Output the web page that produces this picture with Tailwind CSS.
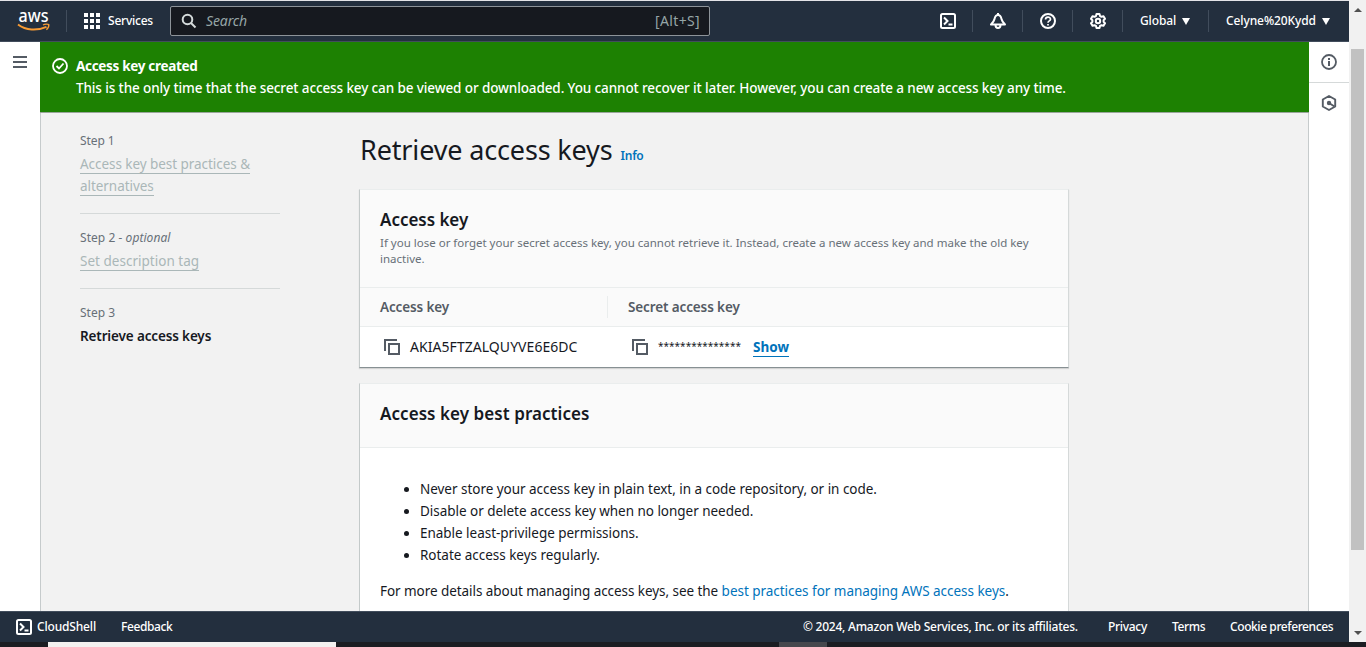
<!DOCTYPE html>
<html lang="en">
<head>
<meta charset="utf-8">
<title>Retrieve access keys</title>
<script src="https://cdn.jsdelivr.net/npm/@tailwindcss/browser@4"></script>
</head>
<body class="h-[647px] w-[1366px] overflow-hidden bg-white font-['Noto_Sans','Open_Sans',sans-serif] text-sm text-[#16191f]">
<div class="flex h-[642px]">
  <div class="flex w-[1349px] flex-col whitespace-nowrap">
    <header class="flex h-[42px] shrink-0 items-center border-t border-b border-t-[#e4e4e8] border-b-[#414d5c] bg-[#232f3e] text-xs font-medium text-white">
      <svg class="ml-4 h-6 w-[34px] overflow-visible" viewBox="0 0 34 24">
        <text x="2.500" y="13" font-family="Noto Sans" font-size="17.500" font-weight="500" textLength="30" lengthAdjust="spacingAndGlyphs" fill="#fff">aws</text>
        <path d="M2 15.500C10 21.600 21 22 30.500 17.800" fill="none" stroke="#f79b34" stroke-width="2"/>
        <path d="M27 16C29 14.800 32 15 32.700 15.500C33 16.600 32 19.300 30.400 20.800" fill="none" stroke="#f79b34" stroke-width="1.400"/>
      </svg>
      <div class="ml-4 h-[22px] w-px bg-[#414d5c]"></div>
      <svg class="ml-[17px] size-4" viewBox="0 0 16 16" fill="#fff"><path d="M0 0h4v4H0zM6 0h4v4H6zM12 0h4v4h-4zM0 6h4v4H0zM6 6h4v4H6zM12 6h4v4h-4zM0 12h4v4H0zM6 12h4v4H6zM12 12h4v4h-4z"/></svg>
      <div class="ml-2 w-[62px] tracking-[-0.22px]">Services</div>
      <div class="flex h-[30px] w-[540px] items-center rounded-xs border border-[#8d9399] bg-[#16191f] text-sm font-normal text-[#95a5a6]">
        <svg class="ml-2.5 size-4" viewBox="0 0 16 16" fill="none" stroke="#d5dbdb" stroke-width="2"><circle cx="6.500" cy="6.500" r="4.800"/><path d="M10 10l4.500 4.500"/></svg>
        <span class="ml-[9px] tracking-[-0.12px] italic">Search</span>
        <span class="mr-[9px] ml-auto tracking-[0.35px]">[Alt+S]</span>
      </div>
      <div class="ml-[230px] flex items-center">
        <svg class="size-4" viewBox="0 0 16 16" fill="none" stroke="#fff" stroke-width="2"><rect x="1" y="1" width="14" height="14" rx="1.500"/><path d="M4 4.500l3.500 3.500L4 11.500M8.500 11.500h4"/></svg>
        <div class="ml-4 h-[22px] w-px bg-[#414d5c]"></div>
        <svg class="ml-[17px] size-4" viewBox="0 0 16 16" fill="none" stroke="#fff" stroke-width="2" stroke-linejoin="round"><path d="M8 0v2M8 2C6 2 5 3.500 4.500 6C4.100 8 3 9.500 1 11.500h14C13 9.500 11.900 8 11.500 6C11 3.500 10 2 8 2zM5.500 12c0 4 5 4 5 0"/></svg>
        <div class="ml-4 h-[22px] w-px bg-[#414d5c]"></div>
        <svg class="ml-[17px] size-4" viewBox="0 0 16 16" fill="none" stroke="#fff" stroke-width="2"><circle cx="8" cy="8" r="7"/><path d="M5.500 6.500C5.500 3.300 10.500 3.300 10.500 6.200C10.500 8 8 7.800 8 9.800M8 11v1.600" stroke-width="1.700"/></svg>
        <div class="ml-4 h-[22px] w-px bg-[#414d5c]"></div>
        <svg class="ml-[17px] size-4" viewBox="0 0 16 16" fill="none" stroke="#fff" stroke-width="2" stroke-linejoin="round"><path d="M6.500 1h3l.5 2 1.500.8 2-.6 1.500 2.600L13.600 7.200v1.600L15 10.200l-1.500 2.600-2-.6L10 13l-.5 2h-3L6 13l-1.500-.8-2 .6L1 10.200 2.400 8.800V7.200L1 5.800l1.500-2.600 2 .6L6 3z"/><circle cx="8" cy="8" r="2.200"/></svg>
        <div class="ml-4 h-[22px] w-px bg-[#414d5c]"></div>
        <div class="ml-[17px] w-[42px] tracking-[-0.14px]">Global</div>
        <svg class="h-[7px] w-2" viewBox="0 0 8 7" fill="#fff"><path d="M0 0h8L4 7z"/></svg>
        <div class="ml-[18px] h-[22px] w-px bg-[#414d5c]"></div>
        <div class="ml-[17px] w-24 tracking-[-0.1px]">Celyne%20Kydd</div>
        <svg class="h-[7px] w-2" viewBox="0 0 8 7" fill="#fff"><path d="M0 0h8L4 7z"/></svg>
      </div>
    </header>

    <div class="flex min-h-0 flex-1">
      <aside class="w-10 shrink-0">
        <svg class="mt-3.5 ml-[13px] h-3 w-3.5" viewBox="0 0 14 12" fill="#545b64"><path d="M0 0h14v2H0zM0 5h14v2H0zM0 10h14v2H0z"/></svg>
      </aside>
      <div class="flex w-[1269px] flex-col">
        <div class="flex h-[71px] shrink-0 border-b border-[#9aa59b] bg-[#1d8102] text-white">
          <svg class="mt-4 ml-3 size-4" viewBox="0 0 16 16" fill="none" stroke="#fff" stroke-width="1.800"><circle cx="8" cy="8" r="7"/><path d="M4.500 8l2.500 2.500L11.500 5.500"/></svg>
          <div class="mt-[13px] ml-2 leading-[22px]">
            <div class="text-[13.5px] font-bold tracking-[-0.31px]">Access key created</div>
            <div class="text-[13.5px] font-medium tracking-[-0.11px]">This is the only time that the secret access key can be viewed or downloaded. You cannot recover it later. However, you can create a new access key any time.</div>
          </div>
        </div>
        <div class="flex min-h-0 flex-1 overflow-hidden border-x border-[#c6cbcc] bg-[#f2f2f2] pl-[39px]">
          <nav class="w-[200px] shrink-0 leading-[22px]">
            <div class="h-[101px] border-b border-[#d5d9d9] pt-[17px] text-[#687078]">
              <div class="text-xs leading-[22px] tracking-[-0.09px]">Step 1</div>
              <div class="mt-px text-[13.5px] tracking-[-0.05px] text-[#aab7b8]"><span class="border-b border-[#aab7b8]">Access key best practices &amp;</span><br><span class="border-b border-[#aab7b8]">alternatives</span></div>
            </div>
            <div class="h-[75px] border-b border-[#d5d9d9] pt-[13px] text-[#687078]">
              <div class="text-xs leading-[22px] tracking-[0.06px]">Step 2 <i>- optional</i></div>
              <div class="mt-px text-[13.5px] tracking-[0.02px] text-[#aab7b8]"><span class="border-b border-[#aab7b8]">Set description tag</span></div>
            </div>
            <div class="pt-[13px] text-[#687078]">
              <div class="text-xs leading-[22px]">Step 3</div>
              <div class="mt-px text-[13.5px] font-semibold tracking-[-0.14px] text-[#16191f]">Retrieve access keys</div>
            </div>
          </nav>
          <main class="ml-[79px] w-[710px] shrink-0 pt-[19px]">
            <div class="flex h-[57px] items-baseline pl-px"><h1 class="text-[27px] leading-9 tracking-[-0.15px]">Retrieve access keys</h1><span class="ml-2 text-xs font-semibold tracking-[-0.25px] text-[#0073bb]">Info</span></div>
            <section class="h-[179px] border border-t-[#eaeded] border-r-[#d5d9d9] border-b-[#879093] border-l-[#c4caca] bg-white shadow-[0_1px_1px_#00000020]">
              <div class="h-[97px] bg-[#fafafa] pt-[19px] pl-5">
                <h2 class="text-[17px] leading-[22px] font-semibold tracking-[-0.03px]">Access key</h2>
                <p class="mt-1 text-[11.5px] leading-4 text-[#687078]">If you lose or forget your secret access key, you cannot retrieve it. Instead, create a new access key and make the old key<br>inactive.</p>
              </div>
              <div class="flex h-10 items-center border-y border-[#eaeded] bg-[#fafafa] pl-5 text-[13.5px] font-semibold tracking-[-0.12px] text-[#545b64]">
                <div class="h-[22px] w-[228px] border-r border-[#eaeded] leading-[22px]">Access key</div>
                <div class="pl-5 leading-[22px]">Secret access key</div>
              </div>
              <div class="flex h-10 items-center pl-6">
                <svg class="size-4" viewBox="0 0 16 16" fill="none" stroke="#545b64" stroke-width="2"><path d="M1 12V1h12M5 5h10v10H5z"/></svg>
                <div class="ml-2.5 w-[222px] tracking-[0.05px]">AKIA5FTZALQUYVE6E6DC</div>
                <svg class="size-4" viewBox="0 0 16 16" fill="none" stroke="#545b64" stroke-width="2"><path d="M1 12V1h12M5 5h10v10H5z"/></svg>
                <div class="ml-2.5 w-[95px] pb-0.5 text-[10px] leading-4 tracking-[0.02px]">***************</div>
                <span class="border-b border-[#0073bb] text-[13.5px] leading-[18px] font-bold tracking-[0.02px] text-[#0073bb]">Show</span>
              </div>
            </section>
            <section class="mt-[15px] h-[300px] border border-t-[#eaeded] border-r-[#d5d9d9] border-l-[#c4caca] bg-white">
              <h2 class="flex h-16 items-center border-b border-[#eaeded] bg-[#fafafa] pb-0.5 pl-5 text-[17px] font-semibold tracking-[0.06px]">Access key best practices</h2>
              <ul class="mt-[30px] list-disc pl-[60px] text-[13.5px] leading-[22px] tracking-[-0.03px]">
                <li>Never store your access key in plain text, in a code repository, or in code.</li>
                <li>Disable or delete access key when no longer needed.</li>
                <li>Enable least-privilege permissions.</li>
                <li>Rotate access keys regularly.</li>
              </ul>
              <p class="mt-3.5 pl-5 text-[13.5px] leading-[22px] tracking-[-0.06px]">For more details about managing access keys, see the <span class="tracking-[-0.03px] text-[#0073bb]">best practices for managing AWS access keys</span>.</p>
            </section>
          </main>
        </div>
      </div>
      <aside class="w-10 shrink-0">
        <div class="flex h-[41px] justify-center border-b border-[#d5d9d9] pt-3">
          <svg class="size-4" viewBox="0 0 16 16" fill="none" stroke="#545b64" stroke-width="1.800"><circle cx="8" cy="8" r="7"/><path d="M8 4v2M8 7v5" stroke-width="2"/></svg>
        </div>
        <div class="flex justify-center pt-3">
          <svg class="size-4" viewBox="0 0 16 16" fill="none" stroke="#545b64" stroke-width="1.900" stroke-linejoin="round"><path d="M8 1l6.200 3.500v7L8 15l-6.200-3.500v-7z"/><circle cx="8" cy="8" r="2.200" fill="#545b64" stroke="none"/><path d="M8 8l5.500 3.500"/></svg>
        </div>
      </aside>
    </div>

    <footer class="flex h-[31px] shrink-0 items-center border-t border-[#414d5c] bg-[#232f3e] text-xs font-medium text-white">
      <svg class="ml-4 size-4" viewBox="0 0 16 16" fill="none" stroke="#fff" stroke-width="2"><rect x="1" y="1" width="14" height="14" rx="1.500"/><path d="M4 4.500l3.500 3.500L4 11.500M8.500 11.500h4"/></svg>
      <div class="ml-[5px] w-[84px] tracking-[-0.17px]">CloudShell</div>
      <div class="w-[682px] tracking-[-0.4px]">Feedback</div>
      <div class="w-[305px] tracking-[-0.24px]">© 2024, Amazon Web Services, Inc. or its affiliates.</div>
      <div class="w-16 tracking-[-0.3px]">Privacy</div>
      <div class="w-[58px] tracking-[-0.4px]">Terms</div>
      <div class="tracking-[-0.41px]">Cookie preferences</div>
    </footer>
  </div>
  <div class="flex w-[17px] flex-col items-center bg-[#f1f1f1]">
    <svg class="mt-2 h-1 w-2" viewBox="0 0 8 4" fill="#505050"><path d="M4 0l4 4H0z"/></svg>
    <div class="mt-[37px] h-[501px] w-[13px] bg-[#c1c1c1]"></div>
    <svg class="mt-[81px] h-1 w-2" viewBox="0 0 8 4" fill="#505050"><path d="M0 0h8L4 4z"/></svg>
  </div>
</div>
<div class="flex h-[5px] bg-[#1b1d22]"><div class="ml-12 w-72 bg-[#f3f1f0]"></div><div class="ml-[443px] w-12 bg-[#46484d]"></div></div>
</body>
</html>
